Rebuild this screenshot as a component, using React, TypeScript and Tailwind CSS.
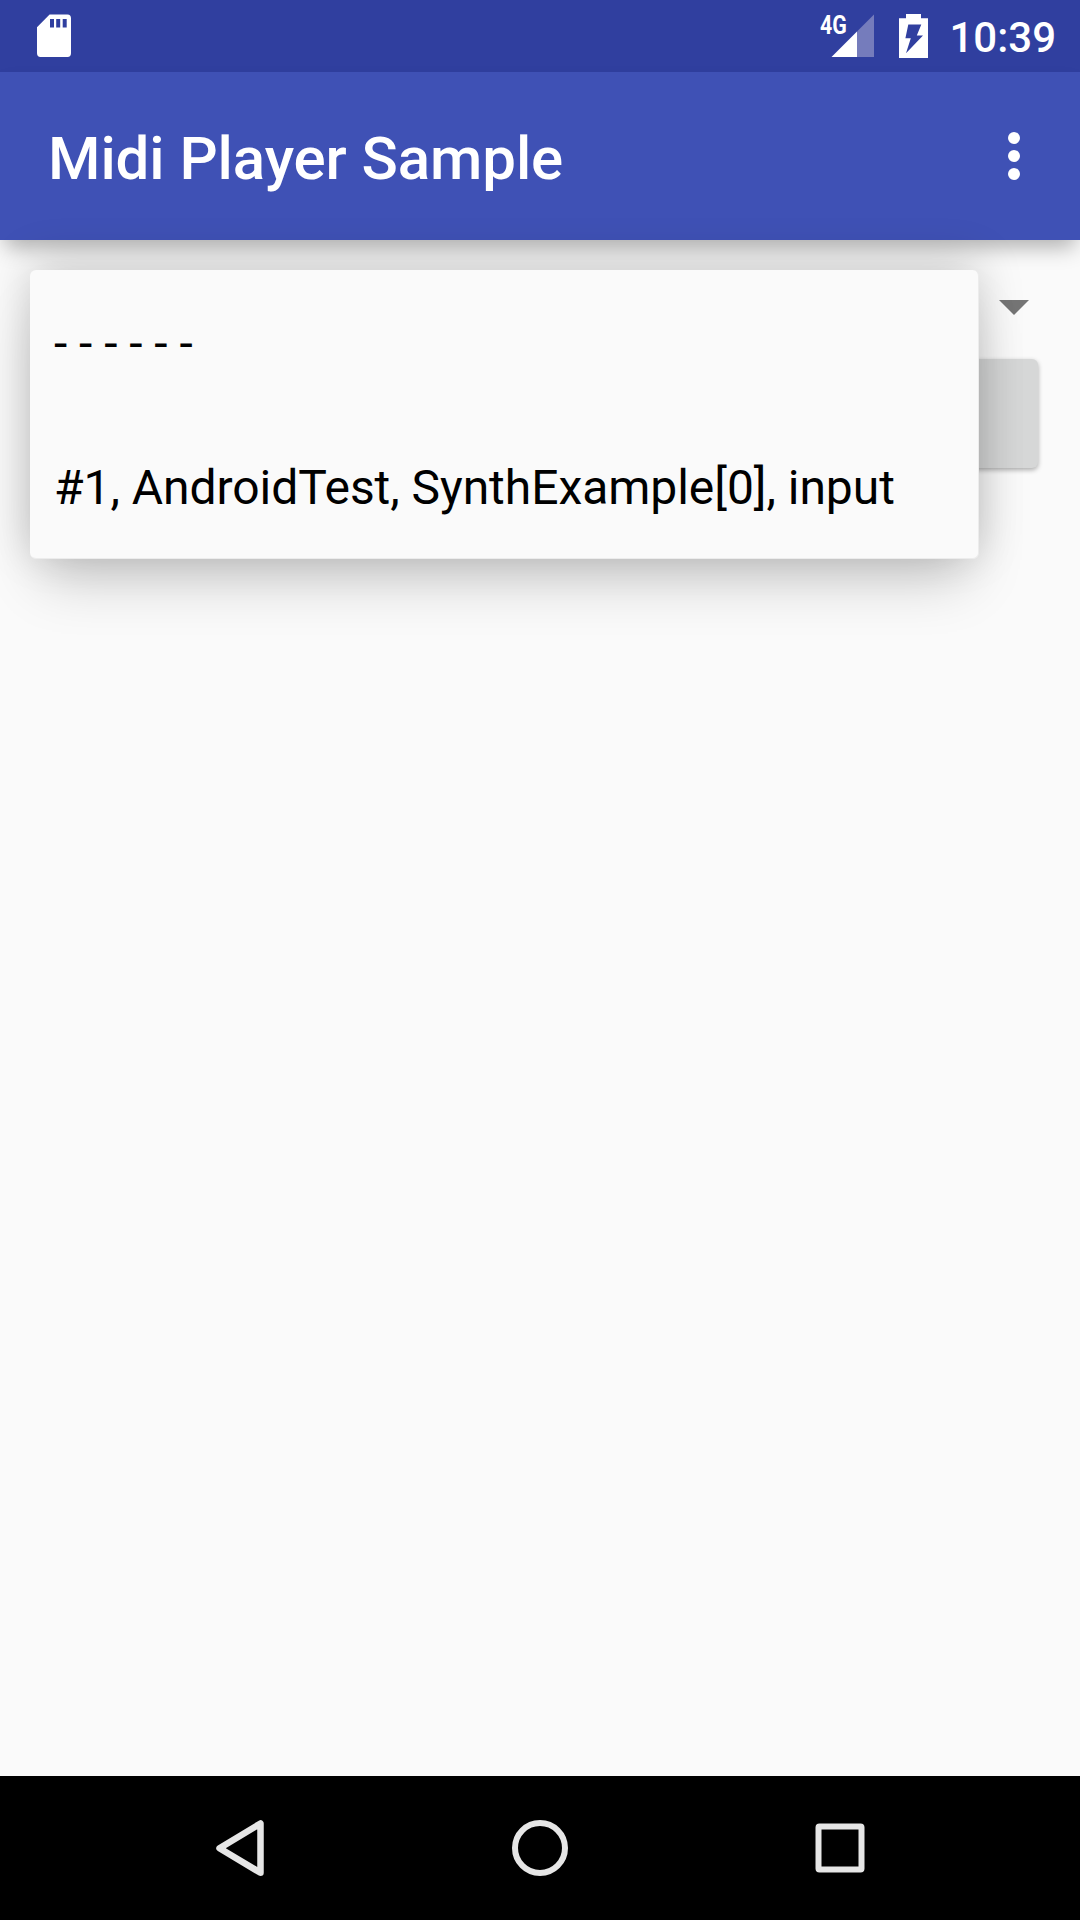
import React from "react";

function StatusBar() {
  return (
    <div className="flex h-[72px] items-center justify-between bg-[#303f9f] text-white">
      <svg className="ml-[36px] h-[44px] w-[36px]" viewBox="36 14 36 44" fill="none">
        <path
          fill="#fff"
          fillRule="evenodd"
          d="M49.6 14.5H67.5Q71 14.5 71 18.3V53.3Q71 57 67.5 57H40.5Q37 57 37 53.3V27.2ZM50 19V27.5H54V19ZM56.2 19V27.5H60.2V19ZM62.7 19V27.5H66.7V19Z"
        />
      </svg>
      <div className="flex items-center">
        <div className="relative h-[44px] w-[54px]">
          <svg className="h-[44px] w-[54px]" viewBox="821 14 54 44">
            <path fill="#757cbc" d="M874 14.5V57H857V31.5Z" />
            <path fill="#fff" d="M857 31.5V57H831.5Z" />
          </svg>
          <span className="absolute top-[-2px] left-[-1px] origin-left scale-x-[0.82] text-[26px] leading-[26px] font-bold">4G</span>
        </div>
        <svg className="ml-[24px] h-[44px] w-[29px]" viewBox="899 14 29 44">
          <path
            fill="#fff"
            fillRule="evenodd"
            d="M906 14H921V18.3H928V58H899V18.3H906ZM908.3 24.5L905.4 38.3H910.8L906 53.2L923 35.6H916.8L921.3 24.5Z"
          />
        </svg>
        <span className="mt-[3px] mr-[24px] ml-[21px] text-[42px] leading-[48px] font-medium">10:39</span>
      </div>
    </div>
  );
}

function AppBar() {
  return (
    <header className="flex h-[168px] items-center justify-between bg-[#3f51b5] pr-[60px] pl-[48px] text-white shadow-[0_12px_20px_-5px_rgba(0,0,0,0.3)]">
      <h1 className="mt-[6px] text-[60px] leading-[72px] font-medium tracking-[-0.08px]">Midi Player Sample</h1>
      <div className="mt-[-24px] flex translate-y-[12px] flex-col gap-[6px]">
        <span className="size-3 rounded-full bg-white" />
        <span className="size-3 rounded-full bg-white" />
        <span className="size-3 rounded-full bg-white" />
      </div>
    </header>
  );
}

function DeviceMenu() {
  return (
    <ul className="absolute top-[30px] left-[30px] w-[949px] rounded-[6px] border-r border-b border-[#ececec] bg-[#fafafa] text-[48px] leading-[56px] tracking-[-0.045px] text-black shadow-[0_32px_54px_-12px_rgba(0,0,0,0.2),0_-8px_46px_rgba(0,0,0,0.18)]">
      <li className="flex h-[144px] items-center pt-[3px] pl-[24px]">- - - - - -</li>
      <li className="flex h-[144px] items-center pt-[3px] pl-[24px] whitespace-nowrap">#1, AndroidTest, SynthExample[0], input</li>
    </ul>
  );
}

function NavBar() {
  return (
    <nav className="grid h-[144px] grid-cols-[90px_300px_300px_300px_90px] items-center justify-items-center bg-black">
      <svg className="col-start-2 size-[60px]" viewBox="210 1818 60 60" fill="none">
        <path d="M219.5 1848.2L260.5 1823.5V1872.8Z" stroke="#e6e6e6" strokeWidth="6.5" strokeLinejoin="round" />
      </svg>
      <svg className="size-[60px]" viewBox="0 0 60 60" fill="none">
        <circle cx="30" cy="30" r="25" stroke="#e6e6e6" strokeWidth="6" />
      </svg>
      <svg className="size-[60px]" viewBox="0 0 60 60" fill="none">
        <rect x="8.5" y="8.5" width="43" height="43" rx="1" stroke="#e6e6e6" strokeWidth="6" />
      </svg>
    </nav>
  );
}

export default function App() {
  return (
    <div className="flex h-[1920px] w-[1080px] flex-col overflow-hidden bg-[#fafafa] font-['Roboto',sans-serif]">
      <StatusBar />
      <AppBar />
      <main className="relative flex-1 px-[42px] pt-[60px]">
        <div className="flex justify-end pr-[9px]">
          <svg className="h-[15px] w-[30px]" viewBox="0 0 30 15">
            <path d="M0 0H30L15 15Z" fill="#757575" />
          </svg>
        </div>
        <div className="mt-[44px] h-[109px] rounded-[6px] bg-[#d6d7d7] shadow-[0_2px_5px_rgba(0,0,0,0.32)]" />
        <DeviceMenu />
      </main>
      <NavBar />
    </div>
  );
}
